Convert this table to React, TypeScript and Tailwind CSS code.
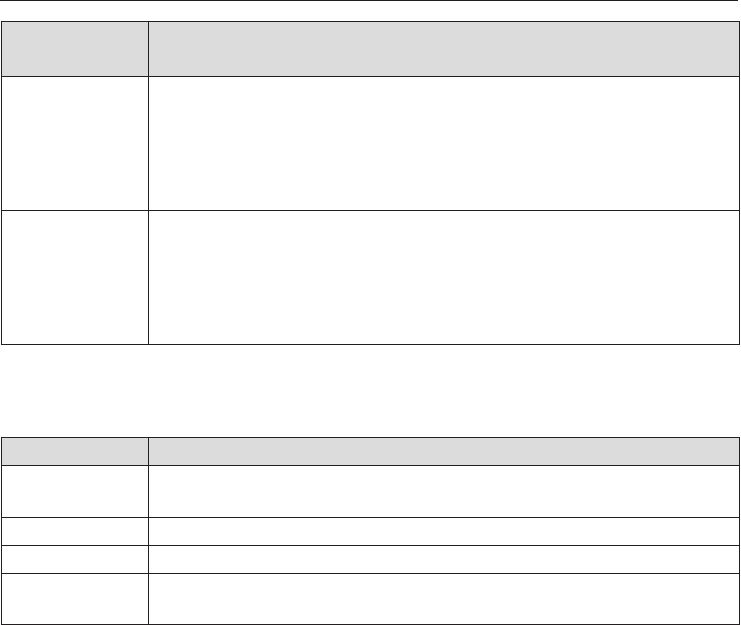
import React from "react"

// ─── Layout data ─────────────────────────────────────────────────────────────
// row heights include the 1px top border
const TOP_ROWS = ["h-[134px]", "h-[134px]"]
const BOTTOM_ROWS = ["h-[52px]", "h-[28px]", "h-[28px]", "h-[51px]"]

function Row({ height, header }: { height: string; header?: boolean }) {
  return (
    <div
      className={`grid grid-cols-[146px_1fr] ${height} ${
        header ? "bg-[#dcdcdc]" : "border-t border-[#231f20]"
      }`}
    >
      <div />
      <div className="border-l border-[#231f20]" />
    </div>
  )
}

function Table({
  headerHeight,
  rows,
  className,
}: {
  headerHeight: string
  rows: string[]
  className?: string
}) {
  return (
    <div className={`ml-px w-[739px] border border-[#231f20] ${className ?? ""}`}>
      <Row height={headerHeight} header />
      {rows.map((h, i) => (
        <Row key={i} height={h} />
      ))}
    </div>
  )
}

export default function App() {
  return (
    <div className="h-[625px] w-[741px] bg-white font-['Liberation_Sans',sans-serif]">
      {/* top rule */}
      <div className="h-px w-[738px] bg-[#231f20]" />

      <Table className="mt-5" headerHeight="h-[54px]" rows={TOP_ROWS} />

      <Table className="mt-[92px]" headerHeight="h-[27px]" rows={BOTTOM_ROWS} />
    </div>
  )
}
